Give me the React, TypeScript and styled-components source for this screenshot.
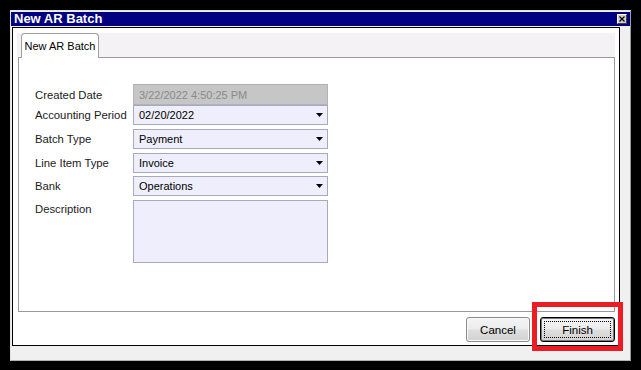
import React from 'react'
import styled, { createGlobalStyle } from 'styled-components'

const GlobalStyle = createGlobalStyle`
  html, body {
    margin     : 0;
    padding    : 0;
    background : #000;
  }
  body {
    width       : 641px;
    height      : 370px;
    overflow    : hidden;
    font-family : "Liberation Sans", Arial, sans-serif;
    font-size   : 11px;
    color       : #111;
  }
  * { box-sizing : border-box; }
`

type FieldRow = {
  label: string
  value: string
  kind: 'readonly' | 'select' | 'memo'
  gap: number
}

const rows: FieldRow[] = [
  { label: 'Created Date', value: '3/22/2022 4:50:25 PM', kind: 'readonly', gap: 0 },
  { label: 'Accounting Period', value: '02/20/2022', kind: 'select', gap: 0 },
  { label: 'Batch Type', value: 'Payment', kind: 'select', gap: 4 },
  { label: 'Line Item Type', value: 'Invoice', kind: 'select', gap: 4 },
  { label: 'Bank', value: 'Operations', kind: 'select', gap: 3 },
  { label: 'Description', value: '', kind: 'memo', gap: 4 },
]

const App = () => {
  return (
    <>
      <GlobalStyle/>
      <Screen>
        <Window>
          <TitleBar>
            <TitleText>New AR Batch</TitleText>
            <CloseButton>
              <svg width='6' height='6' viewBox='0 0 6 6'>
                <path d='M0.5 0.5 L5.5 5.5 M5.5 0.5 L0.5 5.5' stroke='#000' strokeWidth='1.2'/>
              </svg>
            </CloseButton>
          </TitleBar>
          <Panel>
            <TabStrip>
              <Tab>New AR Batch</Tab>
            </TabStrip>
            <TabPage>
              <Form>
                {rows.map( r => (
                  <Row key={r.label} $gap={r.gap} $memo={r.kind === 'memo'}>
                    <Label $memo={r.kind === 'memo'}>{r.label}</Label>
                    <Field $kind={r.kind}>
                      <span>{r.value}</span>
                      {r.kind === 'select' && (
                        <svg width='7' height='4' viewBox='0 0 7 4'>
                          <polygon points='0,0 7,0 3.5,4' fill='#000'/>
                        </svg>
                      )}
                    </Field>
                  </Row>
                ) )}
              </Form>
            </TabPage>
            <ButtonRow>
              <Button $width={64}>Cancel</Button>
              <Highlight>
                <Button $width={75} $default>Finish</Button>
                <RedBox/>
              </Highlight>
            </ButtonRow>
          </Panel>
        </Window>
      </Screen>
    </>
  )
}

export default App

const Screen = styled.div`
  padding : 10px 0 0 10px;
`

const Window = styled.div`
  width         : 621px;
  height        : 351px;
  background    : #f0f0f0;
  border-top    : 1px solid #e4e4e4;
  border-left   : 1px solid #e4e4e4;
  border-right  : 1px solid #9c9c9c;
  border-bottom : 1px solid #b4b4b4;
  padding-top   : 1px;
`

const TitleBar = styled.div`
  height          : 14px;
  background      : #000080;
  display         : flex;
  align-items     : center;
  justify-content : space-between;
  padding         : 0 3px 0 3px;
`

const TitleText = styled.span`
  color       : #fff;
  font-weight : 700;
  font-size   : 13px;
  line-height : 14px;
`

const CloseButton = styled.div`
  width           : 10px;
  height          : 10px;
  background      : #d4d0c8;
  border-top      : 1px solid #fff;
  border-left     : 1px solid #fff;
  border-right    : 1px solid #404040;
  border-bottom   : 1px solid #404040;
  display         : flex;
  align-items     : center;
  justify-content : center;
`

const Panel = styled.div`
  margin         : 1px 0 0 1px;
  width          : 608px;
  height         : 319px;
  background     : #fff;
  border         : 1px solid #000;
  padding        : 5px 4px 0 4px;
  display        : flex;
  flex-direction : column;
`

const TabStrip = styled.div`
  height       : 24px;
  background   : #f5f2f5;
  display      : flex;
  align-items  : flex-end;
  padding-left : 4px;
`

const Tab = styled.div`
  position        : relative;
  z-index         : 1;
  width           : 78px;
  height          : 25px;
  margin-bottom   : -1px;
  background      : #fff;
  border          : 1px solid #a0a0a0;
  border-bottom   : none;
  border-radius   : 4px 4px 0 0;
  display         : flex;
  align-items     : center;
  justify-content : center;
  padding-bottom  : 1px;
  color           : #000;
`

const TabPage = styled.div`
  margin-left : 1px;
  height      : 255px;
  border      : 1px solid #9a9a9a;
  padding     : 26px 0 0 16px;
`

const Form = styled.div`
  display        : flex;
  flex-direction : column;
`

const Row = styled.div<{ $gap: number; $memo: boolean }>`
  display     : flex;
  align-items : ${p => p.$memo ? 'flex-start' : 'center'};
  margin-top  : ${p => p.$gap}px;
`

const Label = styled.div<{ $memo: boolean }>`
  width       : 98px;
  font-size   : 11.3px;
  color       : #1a1a1a;
  padding-top : ${p => p.$memo ? '3px' : '0'};
`

const Field = styled.div<{ $kind: 'readonly' | 'select' | 'memo' }>`
  width           : 195px;
  height          : ${p => p.$kind === 'memo' ? 63 : p.$kind === 'readonly' ? 21 : 20}px;
  background      : ${p => p.$kind === 'readonly' ? '#c6c6c6' : '#eeeefc'};
  border          : 1px solid ${p => p.$kind === 'readonly' ? '#b2b2bc' : '#a9a9bd'};
  color           : ${p => p.$kind === 'readonly' ? '#8a8a8a' : '#000'};
  display         : flex;
  align-items     : center;
  justify-content : space-between;
  padding         : 0 4px 0 5px;
`

const ButtonRow = styled.div`
  display         : flex;
  justify-content : flex-end;
  gap             : 10px;
  margin-top      : 5px;
`

const Button = styled.div<{ $width: number; $default?: boolean }>`
  position        : relative;
  width           : ${p => p.$width}px;
  height          : 25px;
  border          : 1px solid ${p => p.$default ? '#000' : '#8a8a8a'};
  border-radius   : 3px;
  background      : linear-gradient(#f4f4f4 0%, #ececec 48%, #dedede 52%, #d2d2d2 100%);
  box-shadow      : inset 0 0 0 1px ${p => p.$default ? '#7a7a7a' : '#fafafa'};
  display         : flex;
  align-items     : center;
  justify-content : center;
  color           : #000;
  font-size       : 11.5px;

  &::after {
    content  : '';
    display  : ${p => p.$default ? 'block' : 'none'};
    position : absolute;
    inset    : 3px;
    border   : 1px dotted #000;
  }
`

const Highlight = styled.div`
  position : relative;
`

const RedBox = styled.div`
  position : absolute;
  top      : -15px;
  left     : -8px;
  right    : -8px;
  bottom   : -9px;
  border   : 5px solid #ec1c24;
`
